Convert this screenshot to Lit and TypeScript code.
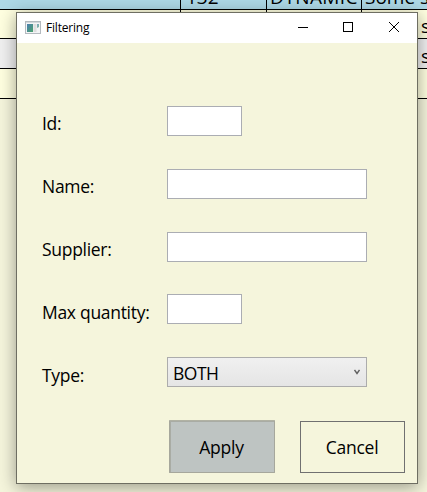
import { LitElement, html, css } from "lit";
import { customElement } from "lit/decorators.js";

@customElement("app-root")
export class AppRoot extends LitElement {
  static styles = css`
    :host { display: block; position: relative; width: 427px; height: 492px; overflow: hidden; background: #f5f5dc; color: #000; font-family: "Open Sans", "Noto Sans", sans-serif; }
    * { box-sizing: border-box; }
    .table { display: grid; grid-template-rows: 10px 29px 30px 30px; }
    .row { display: grid; grid-template-columns: 181px 86px 95px 1fr; border-bottom: 1px solid #000; background: #ffffe0; overflow: hidden; }
    .row.head { background: #add8e6; align-items: end; }
    .row.alt { background: #f0f0f0; }
    .cell { height: 100%; border-right: 1px solid #000; padding-left: 5px; white-space: nowrap; font-size: 19px; line-height: 24px; overflow: hidden; display: flex; align-items: flex-end; }
    .cell:last-child { border-right: 0; padding-left: 3px; }
    .cell span { display: block; }
    .head .cell:nth-child(3) { padding-left: 3px; letter-spacing: .4px; }
    .row:not(.head) .cell:last-child { padding-left: 59px; }
    .window { position: absolute; left: 16px; top: 12px; width: 402px; height: 472px; border: 1px solid #6e6e62; background: #f5f5dc; box-shadow: 0 3px 16px rgba(0,0,0,.38); display: flex; flex-direction: column; }
    .title { height: 30px; background: #fff; display: flex; align-items: center; padding-left: 8px; }
    .title svg { flex: none; display: block; }
    .name { font-size: 12px; line-height: 16px; letter-spacing: -.2px; margin-left: 5px; flex: 1; }
    .form { padding: 63px 0 0 25px; }
    .field { display: grid; grid-template-columns: 125px 200px; height: 63px; align-items: start; }
    .field.short { height: 62px; }
    .label { font-size: 17.5px; line-height: 24px; margin-top: 5px; white-space: nowrap; letter-spacing: -.3px; }
    .label.low { margin-top: 6px; }
    .box { height: 30px; border: 1px solid #abadb3; background: #fff; width: 200px; }
    .box.small { width: 75px; }
    .combo { display: flex; justify-content: space-between; align-items: center; padding: 2px 6px 0 5px; background: linear-gradient(#f0f0f0,#e5e5e5); border-color: #acacac; font-size: 17.5px; letter-spacing: -.5px; line-height: 24px; }
    .combo svg { display: block; margin-top: -3px; }
    .actions { display: flex; gap: 25px; padding-left: 152px; align-items: flex-end; height: 53px; }
    .btn { display: flex; align-items: center; justify-content: center; width: 105px; height: 52px; border: 1px solid #707070; font-size: 17.5px; letter-spacing: -.25px; padding-right: 1px; }
    .btn.primary { width: 106px; height: 53px; background: #bec4c2; border-color: #a6a79c; border-top-color: #b1b2a3; box-shadow: inset 1px 1px #a9aca4; border-radius: 1px; }
  `;

  field(label: string, control: unknown, short = false, low = false) {
    return html`<div class="field ${short ? "short" : ""}"><div class="label ${low ? "low" : ""}">${label}</div>${control}</div>`;
  }

  render() {
    const wide = html`<div class="box"></div>`;
    const small = html`<div class="box small"></div>`;
    return html`
      <div class="table">
        <div class="row head">
          <div class="cell"></div><div class="cell"><span>132</span></div><div class="cell"><span>DYNAMIC</span></div><div class="cell"><span>Some s</span></div>
        </div>
        ${["", "alt", "plain"].map((c) => html`<div class="row ${c}">
          <div class="cell"></div><div class="cell"></div><div class="cell"></div><div class="cell"><span>${c === "plain" ? "" : "s"}</span></div>
        </div>`)}
      </div>
      <div class="window">
        <div class="title">
          <svg width="16" height="14" viewBox="0 0 16 14">
            <defs><linearGradient id="g" x2="1" y2="1"><stop stop-color="#4c7fb0"/><stop offset="1" stop-color="#4aa36c"/></linearGradient></defs>
            <rect x=".5" y=".5" width="15" height="12" fill="#f4f5f6" stroke="#b4babf"/>
            <path d="M1 1.5h14" stroke="#d3d8dc"/>
            <rect x="2" y="3" width="6" height="8" fill="url(#g)"/>
            <rect x="8.5" y="3" width="3" height="8" fill="#dedede"/>
            <path d="M12 3h2v3l-2 1z" fill="url(#g)" opacity=".7"/>
          </svg>
          <div class="name">Filtering</div>
          <svg width="120" height="30" viewBox="0 0 120 30" fill="none" stroke="#000">
            <path d="M1 14.5h10"/><rect x="46.5" y="9.5" width="9" height="9"/><path d="M92 9l10 10M102 9l-10 10"/>
          </svg>
        </div>
        <div class="form">
          ${this.field("Id:", small)}
          ${this.field("Name:", wide)}
          ${this.field("Supplier:", wide, true)}
          ${this.field("Max quantity:", small, false, true)}
          ${this.field("Type:", html`<div class="box combo"><span>BOTH</span>
            <svg width="6" height="6" viewBox="0 0 6 6" fill="none" stroke="#606060" stroke-width="1.4"><path d="M.5 1L3 4.5L5.5 1"/></svg></div>`, false, true)}
        </div>
        <div class="actions"><div class="btn primary">Apply</div><div class="btn">Cancel</div></div>
      </div>`;
  }
}
